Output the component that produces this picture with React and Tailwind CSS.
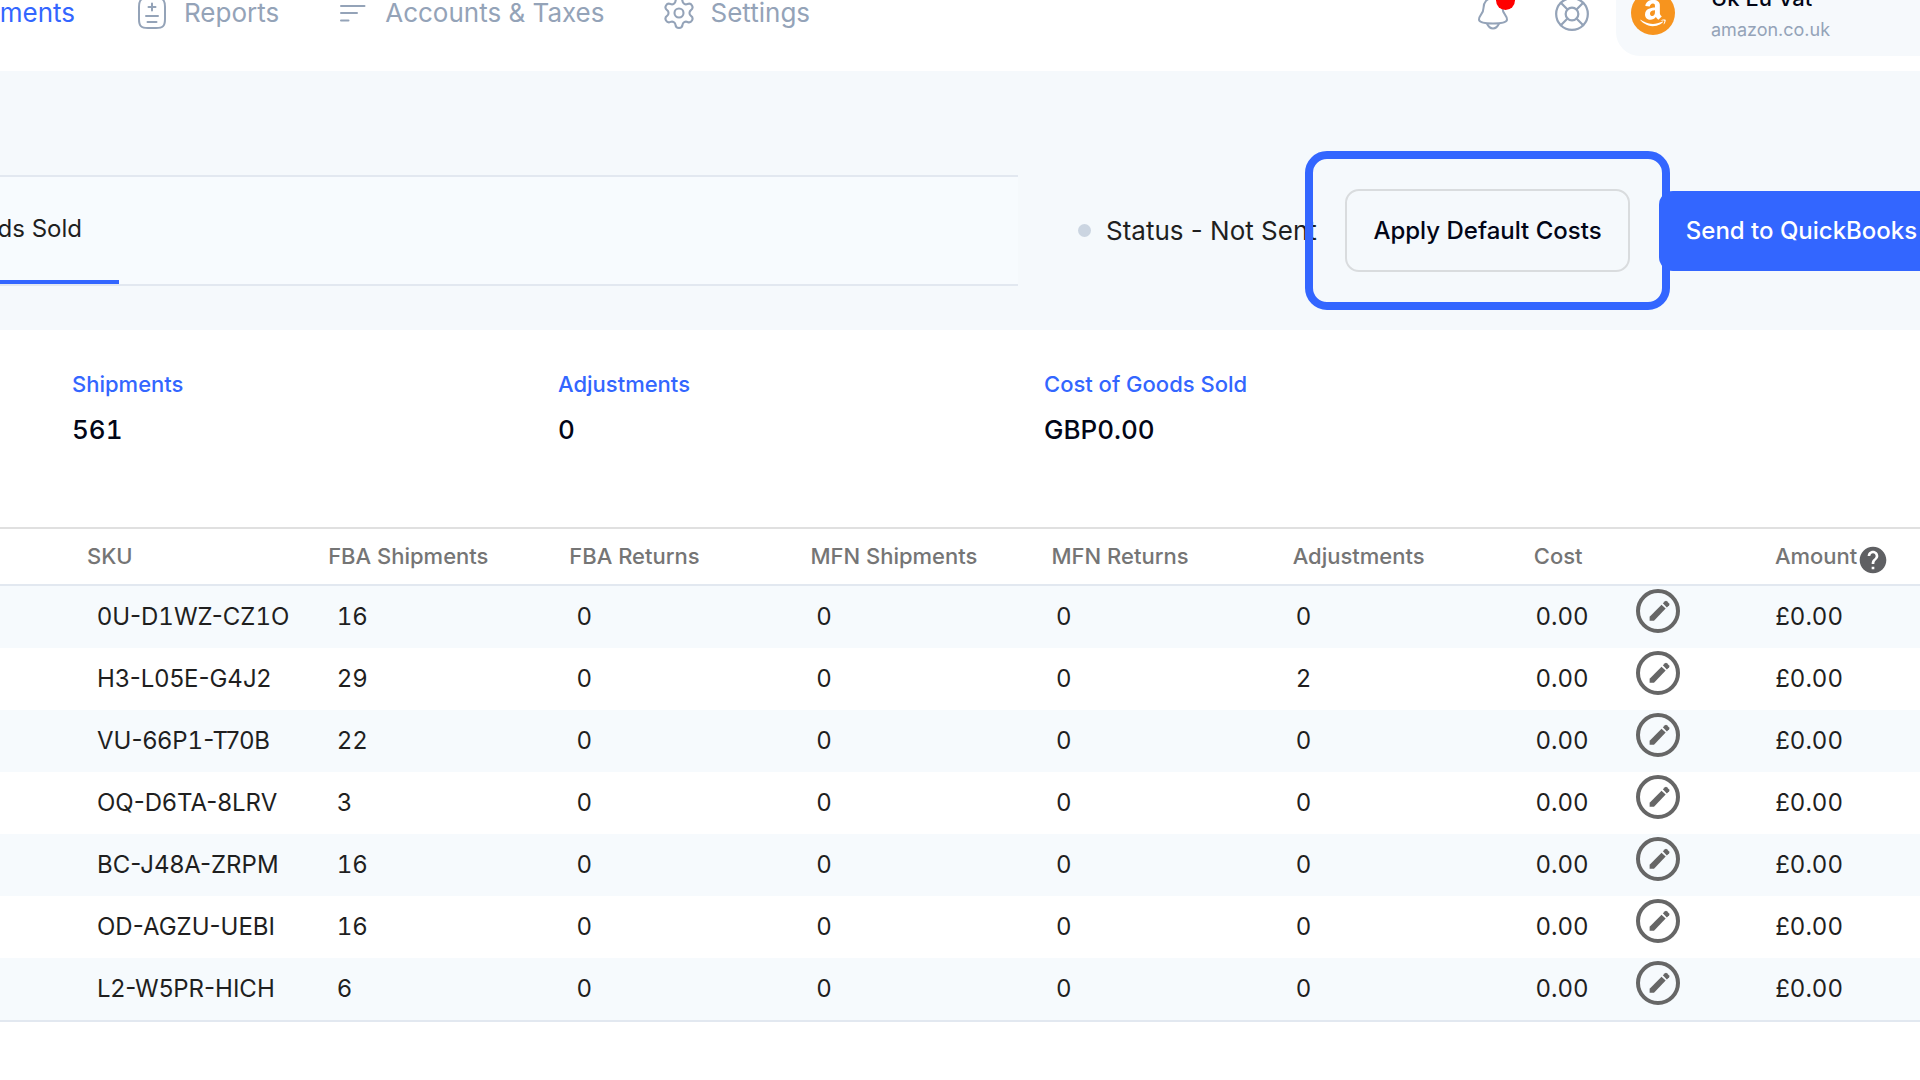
import React from "react";
import { Settings, LifeBuoy } from "lucide-react";
import { FaAmazon } from "react-icons/fa";
import { MdHelp } from "react-icons/md";

const columns = [
  "SKU",
  "FBA Shipments",
  "FBA Returns",
  "MFN Shipments",
  "MFN Returns",
  "Adjustments",
  "Cost",
];

const rows = [
  { sku: "0U-D1WZ-CZ1O", fba: 16, adjustments: 0 },
  { sku: "H3-L05E-G4J2", fba: 29, adjustments: 2 },
  { sku: "VU-66P1-T70B", fba: 22, adjustments: 0 },
  { sku: "OQ-D6TA-8LRV", fba: 3, adjustments: 0 },
  { sku: "BC-J48A-ZRPM", fba: 16, adjustments: 0 },
  { sku: "OD-AGZU-UEBI", fba: 16, adjustments: 0 },
  { sku: "L2-W5PR-HICH", fba: 6, adjustments: 0 },
];

const stats = [
  { label: "Shipments", value: "561" },
  { label: "Adjustments", value: "0" },
  { label: "Cost of Goods Sold", value: "GBP0.00" },
];

function ReportsIcon() {
  return (
    <svg width="28" height="32" viewBox="0 0 28 32" fill="none" stroke="currentColor" strokeWidth="2" strokeLinecap="round">
      <path d="M1 10C1 3 3 1 10 1h8c7 0 9 2 9 9v12c0 7-2 9-9 9h-8c-7 0-9-2-9-9z" />
      <path d="M14 6.500v7M10.500 10h7M8 19h12M9.500 25h9" />
    </svg>
  );
}

function LinesIcon() {
  return (
    <svg width="28" height="20" viewBox="0 0 28 20" fill="none" stroke="currentColor" strokeWidth="2" strokeLinecap="round">
      <path d="M2 3h23.500M2 10h16M2 17.500h7.500" />
    </svg>
  );
}

function BellIcon() {
  return (
    <svg width="32" height="36" viewBox="0 0 32 36" fill="none" stroke="currentColor" strokeWidth="2" strokeLinejoin="round">
      <path d="M16 2C10 2 6.500 6.500 6.500 12C6.500 18 2 19 2 23.500C2 26.500 9 27.500 16 27.500S30 26.500 30 23.500C30 19 25.500 18 25.500 12C25.500 6.500 22 2 16 2Z" />
      <path d="M10 27.500C11.500 31 13.500 32.500 16 32.500S20.500 31 22 27.500" />
    </svg>
  );
}

function PencilIcon() {
  return (
    <svg width="24" height="24" viewBox="0 0 22 22" fill="currentColor">
      <path d="M1.500 16.300L12.400 5.200L16.200 8.800L5.500 20H1.500Z" />
      <path d="M13.600 4L15.600 2Q16.500 1.300 17.300 2L19.400 4.100Q20 5 19.400 5.700L17.300 7.700Z" />
    </svg>
  );
}

function NavItem({ icon, children }) {
  return (
    <a href="#" className="flex items-center gap-[18px] whitespace-nowrap text-[#94a3b8]">
      {icon}
      <span>{children}</span>
    </a>
  );
}

// Gives the narrow digit 1 the same width as the other digits of a code.
function Sku({ code }) {
  return code.split(/(1)/).map((part, i) =>
    part === "1" ? (
      <span key={i} className="tabular-nums">
        {part}
      </span>
    ) : (
      part
    ),
  );
}

export default function App() {
  return (
    <div className="min-h-screen overflow-hidden bg-white font-['Inter',sans-serif] text-[#1f1f1f]">
      <header className="-mt-[46px] flex h-[117px] items-center">
        <nav className="flex items-center gap-[60px] text-[26px] leading-8">
          <a href="#" className="flex w-[78px] justify-end pr-[3px] whitespace-nowrap text-[#3366ff]">
            Settlements
          </a>
          <NavItem icon={<ReportsIcon />}>Reports</NavItem>
          <NavItem icon={<LinesIcon />}>Accounts &amp; Taxes</NavItem>
          <NavItem icon={<Settings size={36} strokeWidth={1.4} className="-mx-1" />}>Settings</NavItem>
        </nav>
        <div className="ml-auto flex shrink-0 items-center text-[#94a3b8]">
          <button type="button" aria-label="Notifications" className="relative mr-11 pt-[3px]">
            <BellIcon />
            <span className="absolute -top-0.5 left-[19px] size-[19px] rounded-full bg-[#ff0000]" />
          </button>
          <button type="button" aria-label="Help" className="mr-[25px] pt-[3px]">
            <LifeBuoy size={38} strokeWidth={1.4} />
          </button>
          <button type="button" className="flex h-[86px] w-[304px] items-center gap-9 rounded-l-3xl bg-[#f6f9fc] pl-[15px] text-left">
            <span className="flex size-11 items-center justify-center rounded-full bg-[#f7941e] text-white">
              <FaAmazon size={30} />
            </span>
            <span className="flex flex-col pt-[3px] leading-8">
              <span className="text-[22px] font-medium text-[#020617]">Uk Eu Vat</span>
              <span className="text-[18px] text-[#94a3b8]">amazon.co.uk</span>
            </span>
          </button>
        </div>
      </header>

      <section className="flex items-center bg-[#f5f9fc] pt-[104px] pb-11">
        <div className="flex h-[111px] flex-1 border-y-2 border-[#e2e8f0] bg-[#f7fbfe]">
          <button type="button" className="flex w-[119px] items-center justify-end border-b-4 border-[#3366ff] pr-[37px] text-2xl whitespace-nowrap">
            Cost of Goods Sold
          </button>
        </div>
        <div className="ml-[60px] flex shrink-0 items-center">
          <span className="size-[13px] rounded-full bg-[#cbd5e1]" />
          <span className="ml-[15px] w-[239px] text-[26px] whitespace-nowrap">Status - Not Sent</span>
          <div className="relative">
            <button type="button" className="h-[83px] w-[285px] rounded-[14px] border-2 border-[#d9dcde] text-2xl font-medium whitespace-nowrap text-[#020617]">
              Apply Default Costs
            </button>
            <div className="pointer-events-none absolute -inset-x-10 -inset-y-[38px] rounded-[22px] border-8 border-[#3366ff]" />
          </div>
          <button type="button" className="relative -mr-6 ml-[29px] h-20 w-[285px] rounded-[14px] bg-[#3366ff] text-2xl font-medium whitespace-nowrap text-white">
            Send to QuickBooks
          </button>
        </div>
      </section>

      <dl className="grid h-[197px] grid-cols-[486fr_486fr_876fr] pt-[38px] pl-[72px] font-medium">
        {stats.map((s) => (
          <div key={s.label}>
            <dt className="text-[22px] leading-8 text-[#3366ff]">{s.label}</dt>
            <dd className="mt-3.5 text-[26px] leading-8 text-[#020617] tabular-nums">{s.value}</dd>
          </div>
        ))}
      </dl>

      <table className="block border-y-2 border-t-[#e0e0e0] border-b-[#e2e8f0]">
        <thead className="block">
          <tr className="grid h-[57px] grid-cols-[repeat(7,241fr)_145fr] items-center border-b-2 border-[#e2e8f0] pl-[87px] text-left text-[22px] text-[#757575]">
            {columns.map((c) => (
              <th key={c} scope="col" className="font-medium">
                {c}
              </th>
            ))}
            <th scope="col" className="flex items-center font-medium">
              Amount
              <MdHelp size={32} className="mt-1.5 text-[#5f6063]" />
            </th>
          </tr>
        </thead>
        <tbody className="block">
          {rows.map((r) => (
            <tr key={r.sku} className="grid h-[62px] grid-cols-[repeat(7,240fr)_145fr] items-center pl-[97px] text-2xl tabular-nums odd:bg-[#f6fafd]">
              <td className="normal-nums">
                <Sku code={r.sku} />
              </td>
              <td>{r.fba}</td>
              <td>0</td>
              <td>0</td>
              <td>0</td>
              <td>{r.adjustments}</td>
              <td className="flex items-center">
                <span className="w-[101px]">0.00</span>
                <button type="button" aria-label={`Edit cost of ${r.sku}`} className="mb-3 flex size-11 items-center justify-center rounded-full border-4 border-[#666666] pl-[3px] text-[#666666]">
                  <PencilIcon />
                </button>
              </td>
              <td>£0.00</td>
            </tr>
          ))}
        </tbody>
      </table>
    </div>
  );
}
